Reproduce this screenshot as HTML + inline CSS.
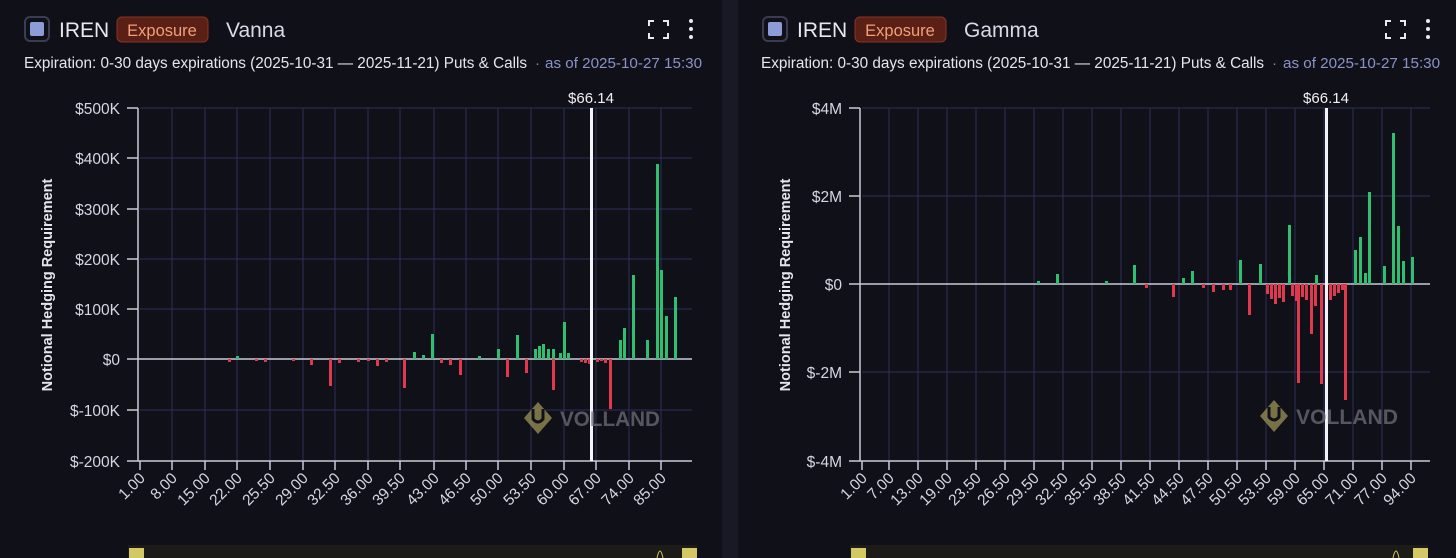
<!DOCTYPE html>
<html><head><meta charset="utf-8"><style>
html,body{margin:0;padding:0;background:#101019;width:1456px;height:558px;overflow:hidden;font-family:"Liberation Sans",sans-serif}
rect.b{width:3px}
</style></head><body>
<svg width="1456" height="558" xmlns="http://www.w3.org/2000/svg" font-family="Liberation Sans, sans-serif">
<rect width="1456" height="558" fill="#101019"/>
<rect x="722" y="0" width="16" height="558" fill="#181925"/>

<!-- ========== LEFT HEADER ========== -->
<rect x="25" y="17" width="24" height="24" rx="5" fill="none" stroke="#3a3d52" stroke-width="2"/>
<rect x="30" y="22" width="14" height="14" rx="2" fill="#8d9bd6"/>
<text x="59" y="37" font-size="21" fill="#e8e9ef">IREN</text>
<rect x="117" y="17" width="91" height="25" rx="5" fill="#5a1f15" stroke="#8a3422" stroke-width="1"/>
<text x="162" y="36" font-size="16.5" fill="#f0a07a" text-anchor="middle">Exposure</text>
<text x="226" y="37" font-size="21" fill="#d8dbe6">Vanna</text>
<g stroke="#e8e9ef" stroke-width="2" fill="none"><path d="M649 26v-5h5M663 21h5v5M668 33v5h-5M654 38h-5v-5"/></g>
<g fill="#e8e9ef"><circle cx="691" cy="21" r="2"/><circle cx="691" cy="29" r="2"/><circle cx="691" cy="37" r="2"/></g>
<text x="24" y="68" font-size="15.3" fill="#e4e6ee">Expiration: 0-30 days expirations (2025-10-31 — 2025-11-21) Puts &amp; Calls</text>
<text x="535" y="68" font-size="15" fill="#7f86a8">·</text>
<text x="545" y="68" font-size="15.2" fill="#8a93c6">as of 2025-10-27 15:30</text>

<!-- ========== RIGHT HEADER ========== -->
<rect x="763" y="17" width="24" height="24" rx="5" fill="none" stroke="#3a3d52" stroke-width="2"/>
<rect x="768" y="22" width="14" height="14" rx="2" fill="#8d9bd6"/>
<text x="797" y="37" font-size="21" fill="#e8e9ef">IREN</text>
<rect x="855" y="17" width="91" height="25" rx="5" fill="#5a1f15" stroke="#8a3422" stroke-width="1"/>
<text x="900" y="36" font-size="16.5" fill="#f0a07a" text-anchor="middle">Exposure</text>
<text x="964" y="37" font-size="21" fill="#d8dbe6">Gamma</text>
<g stroke="#e8e9ef" stroke-width="2" fill="none"><path d="M1386 26v-5h5M1400 21h5v5M1405 33v5h-5M1391 38h-5v-5"/></g>
<g fill="#e8e9ef"><circle cx="1428" cy="21" r="2"/><circle cx="1428" cy="29" r="2"/><circle cx="1428" cy="37" r="2"/></g>
<text x="761" y="68" font-size="15.3" fill="#e4e6ee">Expiration: 0-30 days expirations (2025-10-31 — 2025-11-21) Puts &amp; Calls</text>
<text x="1272" y="68" font-size="15" fill="#7f86a8">·</text>
<text x="1283" y="68" font-size="15.2" fill="#8a93c6">as of 2025-10-27 15:30</text>

<!-- ========== LEFT CHART ========== -->
<g stroke="#2a3156" stroke-width="1">
<path d="M140 108H692M140 158H692M140 209H692M140 259H692M140 309H692M140 410H692"/>
<path d="M172 108V461M205 108V461M237 108V461M270 108V461M303 108V461M335 108V461M368 108V461M400 108V461M434 108V461M466 108V461M498 108V461M531 108V461M564 108V461M596 108V461M629 108V461M661 108V461"/>
</g>
<g stroke="#c8cbd8" stroke-width="1.5">
<path d="M138 108V461M138 461H692M138 359H692"/>
<path d="M127 108H138M127 158H138M127 209H138M127 259H138M127 309H138M127 359H138M127 410H138M127 461H138"/>
<path d="M140 461v9M172 461v9M205 461v9M237 461v9M270 461v9M303 461v9M335 461v9M368 461v9M400 461v9M434 461v9M466 461v9M498 461v9M531 461v9M564 461v9M596 461v9M629 461v9M661 461v9"/>
</g>
<g font-size="15.5" fill="#d4d7e2" text-anchor="end">
<text x="120" y="114">$500K</text><text x="120" y="164">$400K</text><text x="120" y="215">$300K</text><text x="120" y="265">$200K</text><text x="120" y="315">$100K</text><text x="120" y="365">$0</text><text x="120" y="416">$-100K</text><text x="120" y="467">$-200K</text>
</g>
<text transform="translate(52 285) rotate(-90)" font-size="14.5" font-weight="bold" fill="#e4e6ee" text-anchor="middle">Notional Hedging Requirement</text>
<g font-size="15.5" fill="#d4d7e2" text-anchor="end">
<text transform="translate(146 479) rotate(-45)">1.00</text>
<text transform="translate(178 479) rotate(-45)">8.00</text>
<text transform="translate(211 479) rotate(-45)">15.00</text>
<text transform="translate(243 479) rotate(-45)">22.00</text>
<text transform="translate(276 479) rotate(-45)">25.50</text>
<text transform="translate(309 479) rotate(-45)">29.00</text>
<text transform="translate(341 479) rotate(-45)">32.50</text>
<text transform="translate(374 479) rotate(-45)">36.00</text>
<text transform="translate(406 479) rotate(-45)">39.50</text>
<text transform="translate(440 479) rotate(-45)">43.00</text>
<text transform="translate(472 479) rotate(-45)">46.50</text>
<text transform="translate(504 479) rotate(-45)">50.00</text>
<text transform="translate(537 479) rotate(-45)">53.50</text>
<text transform="translate(570 479) rotate(-45)">60.00</text>
<text transform="translate(602 479) rotate(-45)">67.00</text>
<text transform="translate(635 479) rotate(-45)">74.00</text>
<text transform="translate(667 479) rotate(-45)">85.00</text>
</g>
<!-- left bars -->
<g fill="#2fbf71">
<rect class="b" x="236" y="356" width="3" height="3"/><rect class="b" x="413" y="352" width="3" height="7"/><rect class="b" x="422" y="355" width="3" height="4"/><rect class="b" x="431" y="334" width="3" height="25"/><rect class="b" x="478" y="356" width="3" height="3"/><rect class="b" x="497" y="349" width="3" height="10"/><rect class="b" x="516" y="335" width="3" height="24"/><rect class="b" x="534" y="349" width="3" height="10"/><rect class="b" x="538" y="346" width="3" height="13"/><rect class="b" x="542" y="344" width="3" height="15"/><rect class="b" x="547" y="349" width="3" height="10"/><rect class="b" x="552" y="349" width="3" height="10"/><rect class="b" x="559" y="353" width="3" height="6"/><rect class="b" x="563" y="322" width="3" height="37"/><rect class="b" x="567" y="353" width="3" height="6"/>
<rect class="b" x="619" y="340" width="3" height="19"/><rect class="b" x="623" y="328" width="3" height="31"/><rect class="b" x="632" y="275" width="3" height="84"/><rect class="b" x="646" y="340" width="3" height="19"/><rect class="b" x="656" y="164" width="3" height="195"/><rect class="b" x="660" y="270" width="3" height="89"/><rect class="b" x="665" y="316" width="3" height="43"/><rect class="b" x="674" y="297" width="3" height="62"/>
</g>
<g fill="#e0394d">
<rect x="228" y="359" width="3" height="3"/><rect x="255" y="359" width="3" height="2"/><rect x="264" y="359" width="3" height="3"/><rect x="292" y="359" width="3" height="2"/><rect x="310" y="359" width="3" height="6"/><rect x="329" y="359" width="3" height="27"/><rect x="338" y="359" width="3" height="4"/><rect x="357" y="359" width="3" height="3"/><rect x="367" y="359" width="3" height="2"/><rect x="376" y="359" width="3" height="7"/><rect x="385" y="359" width="3" height="3"/><rect x="403" y="359" width="3" height="29"/><rect x="440" y="359" width="3" height="4"/><rect x="449" y="359" width="3" height="6"/><rect x="459" y="359" width="3" height="16"/><rect x="506" y="359" width="3" height="18"/><rect x="525" y="359" width="3" height="14"/><rect x="552" y="359" width="3" height="31"/><rect x="580" y="359" width="3" height="3"/><rect x="584" y="359" width="3" height="4"/><rect x="588" y="359" width="2" height="5"/><rect x="596" y="359" width="3" height="3"/><rect x="600" y="359" width="3" height="2"/><rect x="604" y="359" width="3" height="4"/><rect x="609" y="359" width="3" height="50"/>
</g>
<rect x="590" y="108" width="3" height="353" fill="#f4f4f8"/>
<text x="591" y="103" font-size="15" fill="#f0f0f4" text-anchor="middle">$66.14</text>
<g opacity="0.75">
<path d="M538 402l14 16-14 16-14-16z" fill="#9c9355"/>
<path d="M533 409v10q5 6 10 0v-10" stroke="#101019" stroke-width="3" fill="none"/>
<text x="560" y="426" font-size="21" font-weight="bold" fill="#6b6e78" textLength="100" lengthAdjust="spacingAndGlyphs">VOLLAND</text>
</g>

<!-- ========== RIGHT CHART ========== -->
<g stroke="#2a3156" stroke-width="1">
<path d="M862 108H1430M862 196H1430M862 372H1430"/>
<path d="M889 108V461M918 108V461M947 108V461M976 108V461M1005 108V461M1034 108V461M1063 108V461M1092 108V461M1121 108V461M1150 108V461M1179 108V461M1208 108V461M1237 108V461M1266 108V461M1295 108V461M1324 108V461M1353 108V461M1382 108V461M1411 108V461"/>
</g>
<g stroke="#c8cbd8" stroke-width="1.5">
<path d="M860 108V461M860 461H1430M860 284H1430"/>
<path d="M849 108H860M849 196H860M849 284H860M849 372H860M849 461H860"/>
<path d="M862 461v9M889 461v9M918 461v9M947 461v9M976 461v9M1005 461v9M1034 461v9M1063 461v9M1092 461v9M1121 461v9M1150 461v9M1179 461v9M1208 461v9M1237 461v9M1266 461v9M1295 461v9M1324 461v9M1353 461v9M1382 461v9M1411 461v9"/>
</g>
<g font-size="15.5" fill="#d4d7e2" text-anchor="end">
<text x="842" y="114">$4M</text><text x="842" y="202">$2M</text><text x="842" y="290">$0</text><text x="842" y="378">$-2M</text><text x="842" y="467">$-4M</text>
</g>
<text transform="translate(790 285) rotate(-90)" font-size="14.5" font-weight="bold" fill="#e4e6ee" text-anchor="middle">Notional Hedging Requirement</text>
<g font-size="15.5" fill="#d4d7e2" text-anchor="end">
<text transform="translate(868 479) rotate(-45)">1.00</text>
<text transform="translate(895 479) rotate(-45)">7.00</text>
<text transform="translate(924 479) rotate(-45)">13.00</text>
<text transform="translate(953 479) rotate(-45)">19.00</text>
<text transform="translate(982 479) rotate(-45)">23.50</text>
<text transform="translate(1011 479) rotate(-45)">26.50</text>
<text transform="translate(1040 479) rotate(-45)">29.50</text>
<text transform="translate(1069 479) rotate(-45)">32.50</text>
<text transform="translate(1098 479) rotate(-45)">35.50</text>
<text transform="translate(1127 479) rotate(-45)">38.50</text>
<text transform="translate(1156 479) rotate(-45)">41.50</text>
<text transform="translate(1185 479) rotate(-45)">44.50</text>
<text transform="translate(1214 479) rotate(-45)">47.50</text>
<text transform="translate(1243 479) rotate(-45)">50.50</text>
<text transform="translate(1272 479) rotate(-45)">53.50</text>
<text transform="translate(1301 479) rotate(-45)">59.00</text>
<text transform="translate(1330 479) rotate(-45)">65.00</text>
<text transform="translate(1359 479) rotate(-45)">71.00</text>
<text transform="translate(1388 479) rotate(-45)">77.00</text>
<text transform="translate(1417 479) rotate(-45)">94.00</text>
</g>
<g fill="#2fbf71">
<rect x="1037" y="281" width="3" height="3"/><rect x="1056" y="274" width="3" height="10"/><rect x="1105" y="281" width="3" height="3"/><rect x="1133" y="265" width="3" height="19"/><rect x="1182" y="278" width="3" height="6"/><rect x="1191" y="271" width="3" height="13"/><rect x="1239" y="260" width="3" height="24"/><rect x="1259" y="264" width="3" height="20"/><rect x="1288" y="225" width="3" height="59"/><rect x="1315" y="275" width="3" height="9"/>
<rect x="1354" y="250" width="3" height="34"/><rect x="1359" y="237" width="3" height="47"/><rect x="1364" y="273" width="3" height="11"/><rect x="1368" y="192" width="3" height="92"/><rect x="1383" y="266" width="3" height="18"/><rect x="1392" y="133" width="3" height="151"/><rect x="1397" y="226" width="3" height="58"/><rect x="1402" y="261" width="3" height="23"/><rect x="1411" y="257" width="3" height="27"/>
</g>
<g fill="#e0394d">
<rect x="1145" y="284" width="3" height="4"/><rect x="1172" y="284" width="3" height="13"/><rect x="1202" y="284" width="3" height="4"/><rect x="1212" y="284" width="3" height="8"/><rect x="1222" y="284" width="3" height="6"/><rect x="1229" y="284" width="3" height="6"/><rect x="1248" y="284" width="3" height="31"/>
<rect x="1266" y="284" width="3" height="10"/><rect x="1270" y="284" width="3" height="15"/><rect x="1274" y="284" width="3" height="20"/><rect x="1278" y="284" width="3" height="14"/><rect x="1282" y="284" width="3" height="18"/><rect x="1291" y="284" width="3" height="12"/><rect x="1295" y="284" width="2" height="17"/><rect x="1297" y="284" width="3" height="99"/><rect x="1301" y="284" width="3" height="13"/><rect x="1305" y="284" width="3" height="16"/><rect x="1310" y="284" width="3" height="50"/><rect x="1314" y="284" width="3" height="22"/><rect x="1320" y="284" width="3" height="100"/><rect x="1329" y="284" width="3" height="16"/><rect x="1333" y="284" width="3" height="12"/><rect x="1337" y="284" width="3" height="9"/><rect x="1341" y="284" width="3" height="6"/><rect x="1344" y="284" width="3" height="116"/>
</g>
<rect x="1325" y="108" width="3" height="353" fill="#f4f4f8"/>
<text x="1326" y="103" font-size="15" fill="#f0f0f4" text-anchor="middle">$66.14</text>
<g opacity="0.75">
<path d="M1274 400l14 16-14 16-14-16z" fill="#9c9355"/>
<path d="M1269 407v10q5 6 10 0v-10" stroke="#101019" stroke-width="3" fill="none"/>
<text x="1296" y="424" font-size="21" font-weight="bold" fill="#6b6e78" textLength="102" lengthAdjust="spacingAndGlyphs">VOLLAND</text>
</g>

<!-- sliders -->
<rect x="128" y="545" width="569" height="13" fill="#1c1b17"/>
<rect x="129" y="548" width="15" height="10" fill="#d4c865"/>
<rect x="682" y="548" width="15" height="10" fill="#d4c865"/>
<path d="M657 558q3-14 6 0" stroke="#d4c865" fill="none"/>
<rect x="850" y="545" width="578" height="13" fill="#1c1b17"/>
<rect x="851" y="548" width="15" height="10" fill="#d4c865"/>
<rect x="1413" y="548" width="15" height="10" fill="#d4c865"/>
<path d="M1393 558q3-14 6 0" stroke="#d4c865" fill="none"/>
</svg>
</body></html>
